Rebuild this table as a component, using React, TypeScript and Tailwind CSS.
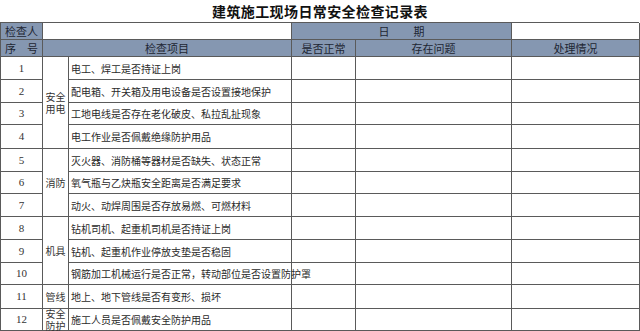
import React from 'react';

const items = [
  { no: 1, text: '电工、焊工是否持证上岗' },
  { no: 2, text: '配电箱、开关箱及用电设备是否设置接地保护' },
  { no: 3, text: '工地电线是否存在老化破皮、私拉乱扯现象' },
  { no: 4, text: '电工作业是否佩戴绝缘防护用品' },
  { no: 5, text: '灭火器、消防桶等器材是否缺失、状态正常' },
  { no: 6, text: '氧气瓶与乙炔瓶安全距离是否满足要求' },
  { no: 7, text: '动火、动焊周围是否存放易燃、可燃材料' },
  { no: 8, text: '钻机司机、起重机司机是否持证上岗' },
  { no: 9, text: '钻机、起重机作业停放支垫是否稳固' },
  { no: 10, text: '钢筋加工机械运行是否正常，转动部位是否设置防护罩' },
  { no: 11, text: '地上、地下管线是否有变形、损坏' },
  { no: 12, text: '施工人员是否佩戴安全防护用品' },
];

// category column, merged over rows
const groups: { label: string[]; start: number; span: number }[] = [
  { label: ['安全', '用电'], start: 3, span: 4 },
  { label: ['消防'], start: 7, span: 3 },
  { label: ['机具'], start: 10, span: 3 },
  { label: ['管线'], start: 13, span: 1 },
  { label: ['安全', '防护'], start: 14, span: 1 },
];

const cell = 'border-r border-b border-[#5a5a5a] flex items-center';
const head = `${cell} bg-[#8597b1] justify-center text-[11px] text-[#1e2633]`;

export default function App() {
  return (
    <div className="w-[640px] h-[331px] bg-white overflow-hidden" style={{ fontFamily: '"Noto Sans CJK SC", sans-serif' }}>
      <div className="h-[22px] flex items-center justify-center text-[14px] font-bold text-[#111] tracking-[0.4px]">
        建筑施工现场日常安全检查记录表
      </div>
      <div className="grid w-[639px] border-t border-l border-[#5a5a5a] grid-cols-[42px_26px_223px_64px_156px_128px] grid-rows-[17px_17px_23px_23px_22px_24px_23px_22px_23px_23px_23px_22px_24px_22px]">
        {/* row 1 */}
        <div className={`${head} col-start-1 row-start-1`}>检查人</div>
        <div className={`${cell} col-start-2 col-span-2 row-start-1 bg-white`} />
        <div className={`${head} col-start-4 col-span-2 row-start-1 gap-[24px]`}>
          <span>日</span>
          <span>期</span>
        </div>
        <div className={`${cell} col-start-6 row-start-1 bg-white`} />

        {/* header */}
        <div className={`${head} col-start-1 row-start-2 gap-[11px]`}>
          <span>序</span>
          <span>号</span>
        </div>
        <div className={`${head} col-start-2 col-span-2 row-start-2`}>检查项目</div>
        <div className={`${head} col-start-4 row-start-2`}>是否正常</div>
        <div className={`${head} col-start-5 row-start-2`}>存在问题</div>
        <div className={`${head} col-start-6 row-start-2`}>处理情况</div>

        {/* body */}
        {items.map((it, i) => (
          <React.Fragment key={it.no}>
            <div
              className={`${cell} col-start-1 justify-center text-[11px] text-[#333]`}
              style={{ gridRowStart: i + 3, fontFamily: '"Liberation Serif", serif' }}
            >
              {it.no}
            </div>
            <div
              className={`${cell} col-start-3 pl-[2px] text-[10px] text-[#2a2a2a] whitespace-nowrap`}
              style={{ gridRowStart: i + 3 }}
            >
              {it.text}
            </div>
            <div className={`${cell} col-start-4`} style={{ gridRowStart: i + 3 }} />
            <div className={`${cell} col-start-5`} style={{ gridRowStart: i + 3 }} />
            <div className={`${cell} col-start-6`} style={{ gridRowStart: i + 3 }} />
          </React.Fragment>
        ))}

        {groups.map((g) => (
          <div
            key={g.start}
            className={`${cell} col-start-2 flex-col justify-center text-[10px] leading-[12px] text-[#333]`}
            style={{ gridRow: `${g.start} / span ${g.span}` }}
          >
            {g.label.map((l) => (
              <span key={l} className="block">{l}</span>
            ))}
          </div>
        ))}
      </div>
    </div>
  );
}
